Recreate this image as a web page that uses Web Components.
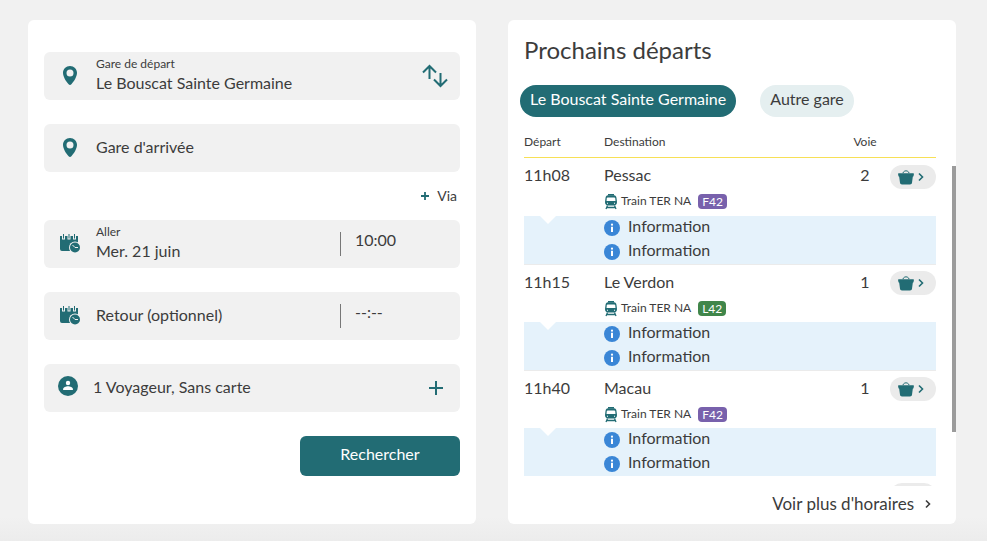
<!DOCTYPE html>
<html lang="fr">
<head>
<meta charset="utf-8">
<meta name="viewport" content="width=device-width, initial-scale=1">
<title>Prochains départs</title>
<style>
  :root {
    --teal: #226c74;
    --ink: #3c3c3c;
    --surface: #f1f1f1;
  }
  * { box-sizing: border-box; }
  body {
    margin: 0;
    background: linear-gradient(to top, #ececec, #f1f1f1 24px);
    color: var(--ink);
    font: 16px/24px Lato, "Open Sans", sans-serif;
  }
</style>
</head>
<body>
<ter-page>
  <ter-card>
    <ter-search>
      <ter-field icon="pin" label="Gare de départ" value="Le Bouscat Sainte Germaine">
        <ter-swap slot="end"></ter-swap>
      </ter-field>
      <ter-field icon="pin" label="Gare d'arrivée"></ter-field>
      <ter-via></ter-via>
      <ter-field icon="calendar" label="Aller" value="Mer. 21 juin">
        <ter-time slot="end" label="Heure aller" value="10:00"></ter-time>
      </ter-field>
      <ter-field icon="calendar" label="Retour (optionnel)">
        <ter-time slot="end" label="Heure retour" value="--:--"></ter-time>
      </ter-field>
      <ter-travellers>1 Voyageur, Sans carte</ter-travellers>
      <ter-submit>Rechercher</ter-submit>
    </ter-search>
  </ter-card>
  <ter-card>
    <ter-board heading="Prochains départs">
      <ter-chip slot="chips" active>Le Bouscat Sainte Germaine</ter-chip>
      <ter-chip slot="chips">Autre gare</ter-chip>
      <ter-departures></ter-departures>
      <ter-more slot="footer">Voir plus d'horaires</ter-more>
    </ter-board>
  </ter-card>
</ter-page>

<script>
const RESET = `
  *, ::before, ::after { box-sizing: border-box; }
  :host([hidden]) { display: none; }
  button, input { font: inherit; color: inherit; margin: 0; padding: 0; border: 0; background: none; }
  button { cursor: pointer; }
  :focus-visible { outline: 2px solid #3a86d6; outline-offset: 2px; }
`;

function define(name, css, markup, after) {
  customElements.define(name, class extends HTMLElement {
    connectedCallback() {
      if (this.shadowRoot) return;
      const root = this.attachShadow({ mode: 'open' });
      const html = typeof markup === 'function' ? markup(this) : markup;
      root.innerHTML = `<style>${RESET}${css}</style>${html}`;
      if (after) after(root, this);
    }
  });
}

const ICONS = {
  pin: [14, 19, `<path fill="currentColor" fill-rule="evenodd" d="M7 0C3 0 0 3 0 6.8 0 10.600 3 15.500 5.600 18.300c.8.900 2 .900 2.800 0C11 15.500 14 10.600 14 6.800 14 3 11 0 7 0Zm0 3.600a3.500 3.500 0 1 1 0 7 3.500 3.500 0 0 1 0-7Z"/>`],
  swap: [26, 24, `<path fill="none" stroke="currentColor" stroke-width="2" d="M7.500 15V2M1 8.500l6.500-6.500 6.500 6.500M18.500 9v13M12 15.500l6.500 6.500 6.500-6.500"/>`],
  calendar: [20, 20, `<path fill="currentColor" d="M0 2h18v10H0zM0 11h12v6H2a2 2 0 0 1-2-2Z"/><g fill="#f1f1f1"><path d="M2 0h3v5.500H2zM7.500 0h3v5.500h-3zM13 0h3v5.500h-3z"/><circle cx="15" cy="13.500" r="6"/></g><path fill="currentColor" d="M3 0h1v4.500H3zM8.500 0h1v4.500h-1zM14 0h1v4.500h-1z"/><circle cx="15" cy="13.500" r="5" fill="currentColor"/><path d="M12.500 11l2.500 2.500h3" stroke="#f1f1f1" fill="none"/>`],
  plus: [14, 14, `<path stroke="currentColor" stroke-width="2" d="M7 0v14M0 7h14"/>`],
  plusSmall: [8, 8, `<path stroke="currentColor" stroke-width="1.800" d="M4 0v8M0 4h8"/>`],
  person: [20, 20, `<circle cx="10" cy="10" r="10" fill="currentColor"/><circle cx="10" cy="7" r="2.200" fill="#fff"/><path fill="#fff" d="M5 13.500c0-2 3-3.200 5-3.200s5 1.200 5 3.200c0 .3-.2.500-.5.500h-9c-.3 0-.5-.2-.5-.5Z"/>`],
  basket: [16, 15, `<path fill="none" stroke="currentColor" d="M4.500 5C4.500-.6 11.500-.6 11.500 5"/><path fill="currentColor" d="M1 3.200h2.800l.7.700.8-.7h5.400l.8.700.7-.7H15c.6 0 1 .4.900 1l-.4 2-.7.600L14 12.800c-.2 1.100-.8 1.700-2 1.700H4c-1.200 0-1.800-.6-2-1.700L1.200 6.800l-.7-.6-.4-2c-.1-.6.3-1 .9-1Z"/>`],
  chevron: [6, 8, `<path fill="none" stroke="currentColor" stroke-width="1.600" d="M1 .5 4.500 4 1 7.500"/>`],
  train: [12, 15, `<path fill="currentColor" d="M3 0h6v1.500H3z"/><path fill="currentColor" d="M3 1.300h6c1.500 0 2.200 1 2.500 2.700L12 8c0 2-1.200 3.500-3 3.500H3C1.200 11.500 0 10 0 8l.5-4C.8 2.300 1.500 1.300 3 1.300Z"/><path fill="#fff" d="M2.600 3.500h6.800c.5 0 .7.200.8.600l.3 2.900h-9l.3-2.900c.1-.4.300-.6.800-.6Z"/><path fill="#fff" d="M2 8.700h1v1H2zM9 8.700h1v1H9z"/><path fill="none" stroke="currentColor" stroke-width="1.300" d="M2.500 11.500 1 15M9.500 11.500 11 15M1.500 13.500h9"/>`],
  info: [16, 16, `<circle cx="8" cy="8" r="8" fill="#3a86d6"/><circle cx="8" cy="4.700" r="1.100" fill="#fff"/><path fill="#fff" d="M7 6.800h2v5.200H7z"/>`]
};

define('ter-icon', `
  :host { display: inline-flex; flex: none; color: var(--teal); }
  :host([plain]) { color: inherit; }
  svg { display: block; overflow: visible; }
`, el => {
  const [w, h, body] = ICONS[el.getAttribute('name')];
  return `<svg width="${w}" height="${h}" viewBox="0 0 ${w} ${h}" aria-hidden="true">${body}</svg>`;
});

define('ter-page', `
  :host {
    display: grid;
    grid-template-columns: repeat(auto-fit, minmax(min(100%, 380px), 1fr));
    gap: 32px;
    min-height: 100vh;
    padding: 20px 31px 17px 28px;
  }
`, `<slot></slot>`);

define('ter-card', `
  :host { display: flex; flex-direction: column; background: #fff; border-radius: 6px; min-width: 0; }
  ::slotted(*) { flex: 1; }
`, `<slot></slot>`);

define('ter-search', `
  form { display: flex; flex-direction: column; gap: 24px; padding: 32px 16px; }
`, `<form onsubmit="return false"><slot></slot></form>`);

define('ter-field', `
  :host { display: block; }
  .box { display: flex; align-items: center; min-height: 48px; background: var(--surface); border-radius: 6px; }
  .icon { display: flex; justify-content: center; flex: none; width: 52px; padding-bottom: 1px; }
  .text { flex: 1; min-width: 0; display: flex; flex-direction: column; padding-bottom: 2px; }
  label { font-size: 12px; line-height: 16px; }
  input { display: block; width: 100%; height: 22px; line-height: 22px; outline-offset: 0; }
  input::placeholder { color: inherit; opacity: 1; }
`, el => {
  const label = el.getAttribute('label'), value = el.getAttribute('value');
  const text = value
    ? `<label for="f">${label}</label><input id="f" type="text" value="${value}">`
    : `<input id="f" type="text" aria-label="${label}" placeholder="${label}">`;
  return `<div class="box"><span class="icon"><ter-icon name="${el.getAttribute('icon')}"></ter-icon></span>
    <div class="text">${text}</div><slot name="end"></slot></div>`;
});

define('ter-swap', `
  :host { display: block; padding-right: 12px; }
  button { display: flex; }
`, `<button type="button" aria-label="Inverser les gares"><ter-icon name="swap"></ter-icon></button>`);

define('ter-time', `
  :host { display: block; width: 120px; height: 24px; border-left: 1px solid #777; padding-left: 14px; }
  input { display: block; width: 80px; height: 16px; line-height: 16px; padding-bottom: 2px; }
`, el => `<input type="text" aria-label="${el.getAttribute('label')}" value="${el.getAttribute('value')}">`);

define('ter-via', `
  :host { display: flex; justify-content: flex-end; margin: -24px 0; height: 48px; align-items: center; padding-right: 3px; }
  button { display: flex; align-items: center; gap: 8px; font-size: 14px; }
`, `<button type="button"><ter-icon name="plusSmall"></ter-icon><span>Via</span></button>`);

define('ter-travellers', `
  :host { display: block; }
  button { display: flex; align-items: center; width: 100%; min-height: 48px; padding: 0 17px 0 14px; gap: 15px; background: var(--surface); border-radius: 6px; text-align: left; }
  span { flex: 1; padding-bottom: 2px; }
  .who { padding-bottom: 4px; }
`, `<button type="button"><ter-icon class="who" name="person"></ter-icon><span><slot></slot></span><ter-icon name="plus"></ter-icon></button>`);

define('ter-submit', `
  :host { display: flex; justify-content: flex-end; }
  button { min-width: 160px; height: 40px; padding-bottom: 4px; border-radius: 6px; background: var(--teal); color: #fff; }
`, `<button type="submit"><slot></slot></button>`);

define('ter-board', `
  :host { display: flex; flex-direction: column; min-height: 0; }
  h2 { margin: 0; padding: 14px 16px 0; font-size: 24px; line-height: 32px; font-weight: 400; }
  .chips { display: flex; flex-wrap: wrap; gap: 24px; padding: 19px 12px 10px; }
  .list { flex: 1; display: flex; min-height: 0; }
  ::slotted(ter-departures) { flex: 1; }
`, el => `<h2>${el.getAttribute('heading')}</h2><div class="chips"><slot name="chips"></slot></div>
  <div class="list"><slot></slot></div><slot name="footer"></slot>`);

define('ter-chip', `
  :host { display: block; }
  button { height: 32px; padding: 0 10px 4px; border-radius: 16px; background: #e5eff0; }
  :host([active]) button { background: var(--teal); color: #fff; }
`, `<button type="button"><slot></slot></button>`);

define('ter-badge', `
  :host { display: inline-block; padding: 0 4px; border-radius: 4px; background: var(--line); color: #fff; font-size: 12px; line-height: 15px; }
`, `<slot></slot>`);

define('ter-buy', `
  :host { display: inline-block; vertical-align: top; }
  button { display: flex; align-items: center; gap: 4px; width: 46px; height: 24px; padding-left: 8px; border-radius: 12px; background: #ebebeb; }
`, `<button type="button" aria-label="Acheter"><ter-icon name="basket"></ter-icon><ter-icon name="chevron"></ter-icon></button>`);

define('ter-more', `
  :host { display: flex; justify-content: flex-end; padding: 6px 25px 8px 16px; font-size: 17px; }
  a { display: flex; align-items: center; gap: 11px; color: inherit; text-decoration: none; }
`, `<a href="#horaires"><span><slot></slot></span><ter-icon plain name="chevron"></ter-icon></a>`);

const DEPARTURES = [
  ['11h08', 'Pessac', 2, 'F42', '#7861ac'],
  ['11h15', 'Le Verdon', 1, 'L42', '#40864a'],
  ['11h40', 'Macau', 1, 'F42', '#7861ac']
];

define('ter-departures', `
  :host { display: block; position: relative; min-height: 240px; }
  .scroll { position: absolute; inset: 0; overflow: hidden auto; scrollbar-width: none; padding: 0 20px 0 16px; }
  .thumb { position: absolute; right: 0; top: 39px; width: 4px; height: 74%; background: #9b9b9b; pointer-events: none; }
  table { width: 100%; table-layout: fixed; border-collapse: separate; border-spacing: 0; }
  th, td { padding: 0; text-align: left; vertical-align: top; font-weight: 400; }
  thead th { position: sticky; top: 0; z-index: 1; height: 31px; font-size: 12px; line-height: 16px; padding-top: 7px; background: #fff; border-bottom: 1px solid #f7e056; }
  .c-time { width: 80px; }
  .c-track { width: 26px; }
  .c-buy { width: 58px; }
  th.track, td.track { text-align: center; }
  .main td { height: 58px; padding-top: 5px; }
  .main.next td { border-top: 1px solid #ebebeb; }
  .main td.buy { text-align: right; padding-top: 7px; }
  .main.next td.buy { padding-top: 6px; }
  .train { display: flex; align-items: center; gap: 4px; font-size: 12px; line-height: 16px; padding: 6px 0 0 1px; }
  .train ter-badge { margin-left: 3px; }
  .notice td { background: #e5f2fb; position: relative; }
  .notice .arrow::before { content: ""; position: absolute; top: 0; left: 16px; border: solid transparent; border-width: 8px 8px 0; border-top-color: #fff; }
  ul { margin: 0; padding: 0; list-style: none; }
  li { display: flex; align-items: center; gap: 8px; height: 24px; }
  li span { padding-bottom: 4px; }
`, () => {
  const info = `<li><ter-icon name="info"></ter-icon><span>Information</span></li>`;
  const rows = DEPARTURES.map(([time, place, track, line, color], i) => `
    <tr class="main${i ? ' next' : ''}">
      <td>${time}</td>
      <td>${place}<div class="train"><ter-icon name="train"></ter-icon><span>Train TER NA</span><ter-badge style="--line:${color}">${line}</ter-badge></div></td>
      <td class="track">${track}</td>
      <td class="buy"><ter-buy></ter-buy></td>
    </tr>
    <tr class="notice"><td class="arrow"></td><td colspan="3"><ul>${info}${info}</ul></td></tr>`).join('');
  return `<div class="scroll"><table>
    <colgroup><col class="c-time"><col><col class="c-track"><col class="c-buy"></colgroup>
    <thead><tr><th scope="col">Départ</th><th scope="col">Destination</th><th scope="col" class="track">Voie</th><th></th></tr></thead>
    <tbody>${rows}<tr class="main"><td colspan="3"></td><td class="buy"><ter-buy></ter-buy></td></tr></tbody></table></div><div class="thumb"></div>`;
}, root => {
  const box = root.querySelector('.scroll'), thumb = root.querySelector('.thumb');
  box.addEventListener('scroll', () => {
    const room = box.clientHeight - thumb.offsetHeight - 39;
    const range = box.scrollHeight - box.clientHeight;
    thumb.style.top = 39 + Math.round(room * box.scrollTop / range) + 'px';
  });
});
</script>
</body>
</html>
